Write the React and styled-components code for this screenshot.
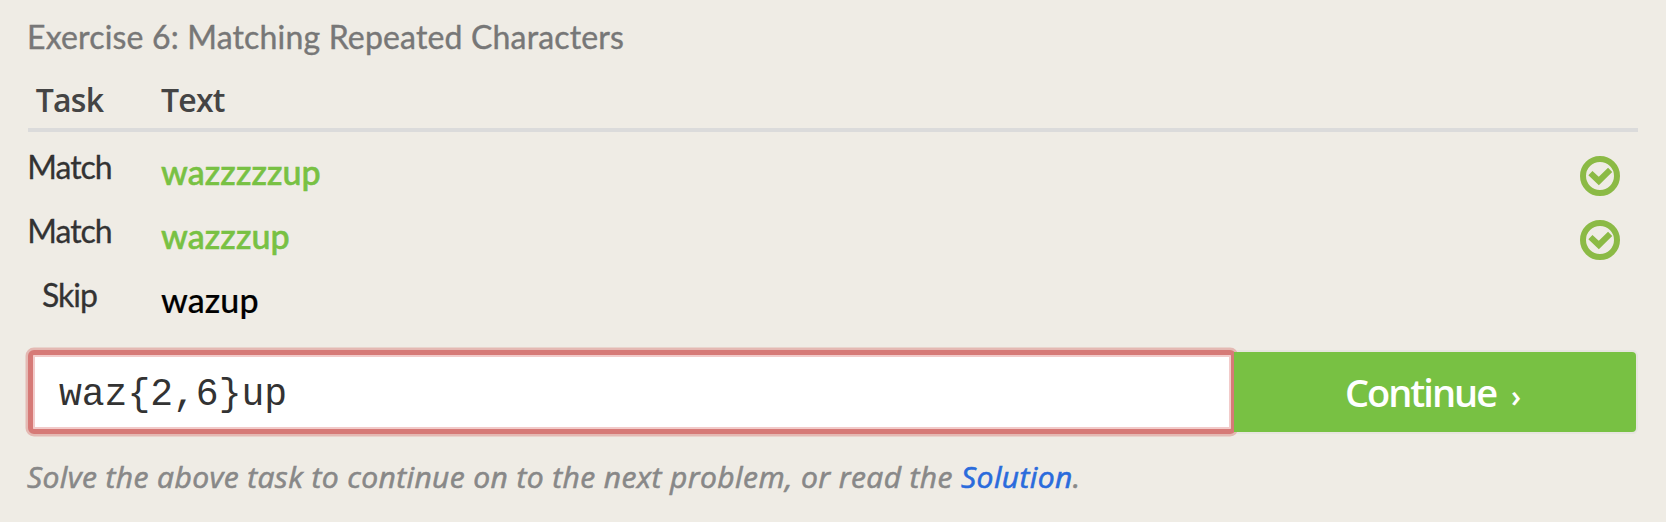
import React from "react";
import styled, { createGlobalStyle } from "styled-components";

const sans = '"Trebuchet MS", Lato, "Open Sans", sans-serif';
const humanist = '"Trebuchet MS", "Open Sans", sans-serif';

const GlobalStyle = createGlobalStyle`
  * { box-sizing: border-box; }
  body { margin: 0; background: #efece5; }
`;

const Panel = styled.main`
  height: 522px;
  padding: 16px 28px 0;
  overflow: hidden;
  background: #efece5;
  font-family: ${sans};
  font-size: 32px;
  color: #333;
`;

const Title = styled.h1`
  margin: 0 0 0 -1px;
  height: 65px;
  line-height: 41px;
  font-size: 32px;
  font-weight: 400;
  letter-spacing: 0.17px;
  color: #777;
  -webkit-text-stroke: 0.4px currentColor;
  white-space: nowrap;
`;

const Row = styled.div`
  display: grid;
  grid-template-columns: 83px 1fr 40px;
  column-gap: 50px;
  height: 64px;
  padding-right: 18px;
`;

const HeaderRow = styled(Row)`
  height: 51px;
  margin-bottom: 14px;
  padding-right: 0;
  border-bottom: 4px solid #dbdbdb;
  font-family: ${humanist};
  font-weight: 600;
  line-height: 38px;
  letter-spacing: -0.8px;
  color: #444;
`;

const Heading = styled.span`
  text-align: ${(p) => (p.$centered ? "center" : "left")};
`;

const Task = styled.span`
  display: flex;
  justify-content: center;
  line-height: 42px;
  letter-spacing: -1px;
  -webkit-text-stroke: 0.3px currentColor;
`;

const Sample = styled.span`
  font-size: 34px;
  line-height: 52px;
  font-weight: 500;
  letter-spacing: 0.1px;
  -webkit-text-stroke: ${(p) => (p.$matched ? "0.6px" : "0.2px")} currentColor;
  color: ${(p) => (p.$matched ? "#78c143" : "#000")};
`;

const Status = styled.svg`
  width: 40px;
  height: 40px;
  margin-top: 10px;
`;

const AnswerBar = styled.form`
  display: flex;
  height: 80px;
  margin-top: 14px;
`;

const Pattern = styled.input`
  flex: none;
  width: 1208px;
  height: 84px;
  margin-top: -2px;
  padding: 5px 25px 0 26px;
  border: 5px solid #d67a77;
  border-radius: 6px;
  outline: none;
  background: #fff;
  box-shadow: 0 0 0 2.5px #e4b9b3, inset 0 0 0 2px #f2cbca;
  font-family: "Courier New", "Liberation Mono", monospace;
  font-size: 38px;
  color: #333;
`;

const Continue = styled.button`
  position: relative;
  flex: 1;
  height: 80px;
  margin-left: -2px;
  margin-right: 2px;
  padding: 0 6px 1px 0;
  border: 0;
  border-radius: 0 4px 4px 0;
  background: #78c143;
  box-shadow: 2px 0 0 #e7e5df, 1px 2px 0 #e7e5df, 1px -2px 0 #e7e5df;
  clip-path: polygon(3px -2px, 110% -2px, 110% 82px, 3px 82px, 3px 80px, 0 80px, 0 0, 3px 0);
  font-family: ${humanist};
  font-size: 38px;
  font-weight: 600;
  letter-spacing: -2px;
  color: #fff;
`;

const Arrow = styled.span`
  margin-left: 7px;
  font-size: 30px;
`;

const Note = styled.p`
  margin: 24px 0 0 -1px;
  font-family: ${humanist};
  font-size: 30px;
  line-height: 42px;
  font-style: italic;
  letter-spacing: 0.4px;
  white-space: nowrap;
  color: #888;
  -webkit-text-stroke: 0.6px currentColor;
`;

const Solution = styled.a`
  color: #2a6bdc;
  text-decoration: none;
`;

const CheckIcon = () => (
  <Status viewBox="0 0 40 40" fill="none">
    <circle cx="20" cy="20" r="17" stroke="#8bba45" strokeWidth="6" />
    <path
      d="M12.6 19.2 18.8 25 28 16"
      stroke="#8bba45"
      strokeWidth="6"
      strokeLinecap="square"
    />
  </Status>
);

const cases = [
  { task: "Match", text: "wazzzzzup", matched: true },
  { task: "Match", text: "wazzzup", matched: true },
  { task: "Skip", text: "wazup", matched: false },
];

export default function App() {
  return (
    <>
      <GlobalStyle />
      <Panel>
        <Title>Exercise 6: Matching Repeated Characters</Title>
        <HeaderRow>
          <Heading $centered>Task</Heading>
          <Heading>Text</Heading>
        </HeaderRow>
        {cases.map(({ task, text, matched }) => (
          <Row key={text}>
            <Task>{task}</Task>
            <Sample $matched={matched}>{text}</Sample>
            {matched && <CheckIcon />}
          </Row>
        ))}
        <AnswerBar>
          <Pattern defaultValue="waz{2,6}up" aria-label="Pattern" spellCheck={false} />
          <Continue type="button">
            Continue <Arrow>›</Arrow>
          </Continue>
        </AnswerBar>
        <Note>
          Solve the above task to continue on to the next problem, or read the{" "}
          <Solution href="#solution">Solution</Solution>.
        </Note>
      </Panel>
    </>
  );
}
